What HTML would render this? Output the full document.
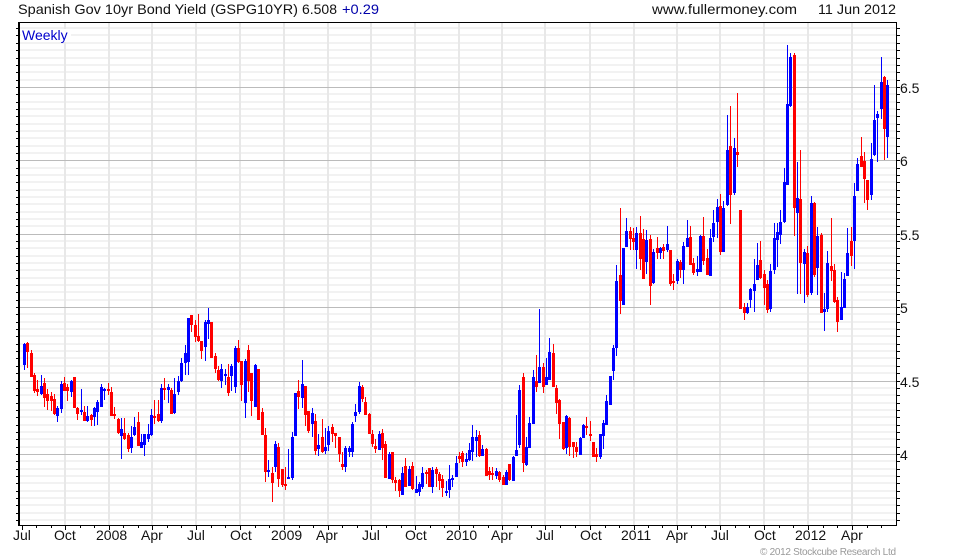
<!DOCTYPE html>
<html><head><meta charset="utf-8"><title>Spanish Gov 10yr Bond Yield</title>
<style>html,body{margin:0;padding:0;background:#fff;width:980px;height:560px;overflow:hidden}svg{display:block}text{font-family:"Liberation Sans",Arial,sans-serif;font-size:14px;fill:#111}</style></head>
<body>
<svg width="980" height="560" viewBox="0 0 980 560" xmlns="http://www.w3.org/2000/svg">
<rect width="980" height="560" fill="#fff"/>
<g shape-rendering="crispEdges" fill="none">
<path stroke="#f2f2f2" stroke-width="2" d="M19 28H896M19 35H896M19 43H896M19 50H896M19 58H896M19 65H896M19 72H896M19 80H896M19 94H896M19 102H896M19 109H896M19 116H896M19 124H896M19 131H896M19 138H896M19 146H896M19 153H896M19 168H896M19 175H896M19 182H896M19 190H896M19 197H896M19 204H896M19 212H896M19 219H896M19 226H896M19 241H896M19 248H896M19 256H896M19 263H896M19 270H896M19 278H896M19 285H896M19 292H896M19 300H896M19 314H896M19 322H896M19 329H896M19 336H896M19 344H896M19 351H896M19 358H896M19 366H896M19 373H896M19 388H896M19 395H896M19 403H896M19 410H896M19 417H896M19 425H896M19 432H896M19 439H896M19 447H896M19 461H896M19 469H896M19 476H896M19 483H896M19 491H896M19 498H896M19 505H896M19 513H896M19 520H896"/>
<path stroke="#e8e8e8" stroke-width="2" d="M65 23V525M109 23V525M152 23V525M196 23V525M240 23V525M284 23V525M328 23V525M371 23V525M415 23V525M459 23V525M502 23V525M545 23V525M590 23V525M634 23V525M677 23V525M720 23V525M764 23V525M808 23V525M852 23V525"/>
<path stroke="#bbbbbb" d="M19 87.5H896M19 160.5H896M19 234.5H896M19 307.5H896M19 381.5H896M19 454.5H896"/>
<rect x="21" y="29" width="50" height="13" fill="#fff" stroke="none"/>
<path stroke="#000" d="M18 22.5H897M896.5 22V526M18 525.5H897"/>
<path stroke="#000" stroke-width="2" d="M19 22V526"/>
<path stroke="#000" d="M16 28.5h2M16 35.5h2M16 43.5h2M16 50.5h2M16 58.5h2M16 65.5h2M16 72.5h2M16 80.5h2M16 87.5h2M16 94.5h2M16 102.5h2M16 109.5h2M16 116.5h2M16 124.5h2M16 131.5h2M16 138.5h2M16 146.5h2M16 153.5h2M16 160.5h2M16 168.5h2M16 175.5h2M16 182.5h2M16 190.5h2M16 197.5h2M16 204.5h2M16 212.5h2M16 219.5h2M16 226.5h2M16 234.5h2M16 241.5h2M16 248.5h2M16 256.5h2M16 263.5h2M16 270.5h2M16 278.5h2M16 285.5h2M16 292.5h2M16 300.5h2M16 307.5h2M16 314.5h2M16 322.5h2M16 329.5h2M16 336.5h2M16 344.5h2M16 351.5h2M16 358.5h2M16 366.5h2M16 373.5h2M16 381.5h2M16 388.5h2M16 395.5h2M16 403.5h2M16 410.5h2M16 417.5h2M16 425.5h2M16 432.5h2M16 439.5h2M16 447.5h2M16 454.5h2M16 461.5h2M16 469.5h2M16 476.5h2M16 483.5h2M16 491.5h2M16 498.5h2M16 505.5h2M16 513.5h2M16 520.5h2"/>
<path stroke="#000" d="M897 28.5h3M897 35.5h3M897 43.5h3M897 50.5h3M897 58.5h3M897 65.5h3M897 72.5h3M897 80.5h3M897 87.5h3M897 94.5h3M897 102.5h3M897 109.5h3M897 116.5h3M897 124.5h3M897 131.5h3M897 138.5h3M897 146.5h3M897 153.5h3M897 160.5h3M897 168.5h3M897 175.5h3M897 182.5h3M897 190.5h3M897 197.5h3M897 204.5h3M897 212.5h3M897 219.5h3M897 226.5h3M897 234.5h3M897 241.5h3M897 248.5h3M897 256.5h3M897 263.5h3M897 270.5h3M897 278.5h3M897 285.5h3M897 292.5h3M897 300.5h3M897 307.5h3M897 314.5h3M897 322.5h3M897 329.5h3M897 336.5h3M897 344.5h3M897 351.5h3M897 358.5h3M897 366.5h3M897 373.5h3M897 381.5h3M897 388.5h3M897 395.5h3M897 403.5h3M897 410.5h3M897 417.5h3M897 425.5h3M897 432.5h3M897 439.5h3M897 447.5h3M897 454.5h3M897 461.5h3M897 469.5h3M897 476.5h3M897 483.5h3M897 491.5h3M897 498.5h3M897 505.5h3M897 513.5h3M897 520.5h3"/>
<path stroke="#000" d="M22.5 526v4M65.5 526v4M109.5 526v4M152.5 526v4M196.5 526v4M240.5 526v4M284.5 526v4M328.5 526v4M371.5 526v4M415.5 526v4M459.5 526v4M502.5 526v4M545.5 526v4M590.5 526v4M634.5 526v4M677.5 526v4M720.5 526v4M764.5 526v4M808.5 526v4M852.5 526v4M36.5 526v2M51.5 526v2M80.5 526v2M94.5 526v2M123.5 526v2M138.5 526v2M167.5 526v2M181.5 526v2M211.5 526v2M225.5 526v2M255.5 526v2M269.5 526v2M299.5 526v2M313.5 526v2M342.5 526v2M357.5 526v2M386.5 526v2M401.5 526v2M430.5 526v2M444.5 526v2M473.5 526v2M488.5 526v2M517.5 526v2M531.5 526v2M560.5 526v2M575.5 526v2M605.5 526v2M619.5 526v2M648.5 526v2M662.5 526v2M691.5 526v2M705.5 526v2M735.5 526v2M749.5 526v2M779.5 526v2M793.5 526v2M823.5 526v2M837.5 526v2M867.5 526v2M881.5 526v2"/>
<path stroke="#0000ff" stroke-width="1" d="M24.5 343V370M41.5 375V395M57.5 406V422M61.5 381V413M71.5 380V397M81.5 389V415M87.5 406V422M94.5 407V426M97.5 400V425M101.5 384V407M104.5 388V400M121.5 418V459M131.5 426V453M134.5 417V436M141.5 434V448M144.5 434V456M148.5 424V442M151.5 409V436M161.5 384V423M168.5 384V403M174.5 378V414M178.5 376V395M181.5 358V382M185.5 345V375M188.5 318V375M205.5 320V361M208.5 308V339M221.5 364V388M225.5 369V385M231.5 364V391M235.5 346V393M245.5 359V418M255.5 364V407M268.5 460V477M275.5 441V472M288.5 449V479M292.5 432V480M295.5 393V436M302.5 360V408M312.5 408V437M318.5 434V456M325.5 428V454M328.5 426V451M345.5 446V472M349.5 446V457M352.5 422V457M355.5 404V422M359.5 382V414M379.5 431V450M389.5 452V479M402.5 467V495M409.5 466V486M416.5 476V493M419.5 482V496M422.5 467V489M432.5 467V493M446.5 481V496M449.5 465V498M452.5 475V487M456.5 456V477M466.5 453V466M469.5 443V461M472.5 425V461M476.5 430V457M482.5 445V456M496.5 468V479M506.5 470V485M513.5 456V481M516.5 415V456M519.5 385V448M526.5 437V466M529.5 417V448M533.5 370V424M539.5 309V383M546.5 358V385M549.5 338V380M566.5 415V454M580.5 437V455M583.5 424V438M600.5 434V459M603.5 420V449M606.5 395V425M610.5 376V405M613.5 345V380M616.5 265V356M623.5 248V305M626.5 218V247M636.5 227V269M646.5 230V274M653.5 249V284M660.5 247V259M667.5 226V252M677.5 259V284M683.5 242V284M687.5 220V247M697.5 256V276M700.5 235V272M710.5 229V276M713.5 210V242M717.5 199V238M723.5 201V252M727.5 115V206M734.5 138V195M747.5 303V314M750.5 288V308M754.5 259V312M757.5 243V280M770.5 264V312M774.5 223V274M777.5 223V267M780.5 210V244M784.5 168V223M787.5 45V185M790.5 53V107M797.5 162V294M804.5 249V303M811.5 196V295M817.5 227V295M824.5 293V331M827.5 251V312M841.5 272V320M844.5 273V308M847.5 228V276M854.5 183V269M857.5 158V191M871.5 143V200M874.5 85V156M877.5 111V162M881.5 57V119M887.5 80V158"/>
<path stroke="#0000ff" stroke-width="3" d="M24.5 344V365M41.5 386V394M57.5 408V416M61.5 384V409M71.5 381V392M81.5 410V412M87.5 416V421M94.5 408V417M97.5 402V412M101.5 387V407M104.5 389V391M121.5 429V436M131.5 437V448M134.5 427V435M141.5 442V448M144.5 434V445M148.5 434V439M151.5 415V435M161.5 388V421M168.5 387V390M174.5 394V413M178.5 381V392M181.5 363V381M185.5 353V363M188.5 318V362M205.5 322V347M208.5 320V324M221.5 369V381M225.5 374V376M231.5 366V376M235.5 348V387M245.5 361V403M255.5 365V407M268.5 470V472M275.5 444V467M288.5 477V479M292.5 437V478M295.5 393V436M302.5 384V398M312.5 413V424M318.5 445V449M325.5 447V451M328.5 431V445M345.5 448V467M349.5 448V452M352.5 424V452M355.5 412V416M359.5 386V412M379.5 434V450M389.5 454V479M402.5 473V495M409.5 469V486M416.5 489V493M419.5 484V492M422.5 473V487M432.5 470V487M446.5 491V493M449.5 479V490M452.5 478V480M456.5 463V477M466.5 459V462M469.5 450V460M472.5 437V452M476.5 437V441M482.5 449V456M496.5 471V476M506.5 472V485M513.5 457V481M516.5 450V456M519.5 390V445M526.5 447V465M529.5 423V448M533.5 377V424M539.5 367V383M546.5 377V385M549.5 352V380M566.5 416V448M580.5 438V455M583.5 425V438M600.5 434V457M603.5 423V436M606.5 401V425M610.5 376V405M613.5 348V371M616.5 281V348M623.5 248V305M626.5 231V247M636.5 233V250M646.5 240V262M653.5 252V283M660.5 248V253M667.5 244V250M677.5 261V281M683.5 246V270M687.5 238V247M697.5 269V272M700.5 236V272M710.5 238V276M713.5 223V237M717.5 207V222M723.5 208V252M727.5 150V205M734.5 148V193M747.5 307V313M750.5 289V300M754.5 284V291M757.5 265V280M770.5 271V309M774.5 238V270M777.5 232V240M780.5 222V235M784.5 182V222M787.5 104V185M790.5 57V106M797.5 198V213M804.5 252V264M811.5 203V293M817.5 236V268M824.5 309V312M827.5 263V309M841.5 307V320M844.5 279V308M847.5 253V276M854.5 196V241M857.5 164V191M871.5 159V195M874.5 120V155M877.5 114V118M881.5 82V109M887.5 85V137"/>
<path stroke="#ff0000" stroke-width="1" d="M27.5 342V368M31.5 350V377M34.5 373V393M37.5 380V396M44.5 378V407M47.5 389V410M51.5 392V411M54.5 394V415M64.5 377V391M67.5 384V401M74.5 377V408M77.5 407V420M84.5 406V421M91.5 414V426M108.5 383V395M111.5 387V416M114.5 407V419M118.5 418V434M124.5 418V440M128.5 433V452M138.5 412V446M154.5 400V424M158.5 400V422M164.5 378V400M171.5 388V414M191.5 315V332M195.5 320V342M198.5 314V342M201.5 341V359M211.5 322V358M215.5 353V373M218.5 366V381M228.5 364V396M238.5 340V363M241.5 361V401M248.5 345V392M251.5 373V416M258.5 369V420M262.5 408V435M265.5 428V482M272.5 467V502M278.5 443V487M282.5 469V487M285.5 467V490M298.5 380V409M305.5 386V426M308.5 411V433M315.5 414V455M322.5 419V453M332.5 424V442M335.5 433V448M339.5 437V462M342.5 452V470M362.5 385V402M365.5 397V415M369.5 413V434M372.5 430V447M375.5 439V453M382.5 429V460M385.5 441V478M392.5 452V483M395.5 477V491M399.5 479V497M405.5 458V487M412.5 462V490M426.5 470V484M429.5 468V487M436.5 467V487M439.5 472V490M442.5 475V497M459.5 452V463M462.5 451V467M479.5 431V457M486.5 448V476M489.5 467V480M492.5 467V480M499.5 471V482M503.5 475V485M509.5 464V481M523.5 373V472M536.5 355V392M543.5 363V393M553.5 344V387M556.5 385V414M559.5 399V439M563.5 422V450M569.5 417V456M573.5 442V458M576.5 442V457M586.5 417V435M590.5 421V441M593.5 442V457M596.5 448V462M620.5 208V314M630.5 227V250M633.5 228V250M640.5 216V270M643.5 229V279M650.5 235V305M657.5 237V259M663.5 244V259M670.5 250V286M673.5 274V290M680.5 260V278M690.5 226V265M693.5 258V275M703.5 217V265M707.5 249V275M720.5 194V255M730.5 106V224M737.5 93V167M740.5 210V309M744.5 303V320M760.5 241V279M764.5 270V305M767.5 280V313M794.5 53V236M800.5 150V294M807.5 246V297M814.5 202V277M821.5 233V313M831.5 218V281M834.5 264V303M837.5 297V332M851.5 227V266M861.5 137V167M864.5 152V203M867.5 180V210M884.5 76V160"/>
<path stroke="#ff0000" stroke-width="3" d="M27.5 343V352M31.5 353V377M34.5 375V391M37.5 389V392M44.5 383V398M47.5 394V401M51.5 396V401M54.5 399V414M64.5 383V391M67.5 387V391M74.5 377V408M77.5 408V414M84.5 412V421M91.5 415V420M108.5 389V391M111.5 392V416M114.5 414V416M118.5 419V433M124.5 433V439M128.5 435V449M138.5 422V446M154.5 416V418M158.5 414V421M164.5 388V390M171.5 390V414M191.5 315V325M195.5 325V337M198.5 336V341M201.5 341V351M211.5 322V358M215.5 356V369M218.5 370V380M228.5 377V393M238.5 348V362M241.5 361V385M248.5 350V381M251.5 373V401M258.5 369V420M262.5 412V435M265.5 435V472M272.5 473V483M278.5 447V479M282.5 469V485M285.5 484V486M298.5 391V397M305.5 386V415M308.5 411V431M315.5 421V451M322.5 437V452M332.5 427V434M335.5 433V436M339.5 437V454M342.5 464V467M362.5 387V399M365.5 402V415M369.5 414V434M372.5 434V444M375.5 446V449M382.5 433V448M385.5 444V478M392.5 452V480M395.5 480V483M399.5 480V491M405.5 466V487M412.5 466V489M426.5 472V474M429.5 468V487M436.5 469V474M439.5 474V481M442.5 479V488M459.5 456V459M462.5 453V462M479.5 435V456M486.5 449V476M489.5 471V475M492.5 473V475M499.5 472V480M503.5 477V485M509.5 464V480M523.5 377V463M536.5 381V387M543.5 367V387M553.5 353V387M556.5 388V403M559.5 400V424M563.5 422V449M569.5 418V447M573.5 442V447M576.5 447V452M586.5 426V428M590.5 434V436M593.5 442V457M596.5 454V457M620.5 275V301M630.5 231V239M633.5 238V242M640.5 233V259M643.5 239V279M650.5 239V286M657.5 248V253M663.5 247V251M670.5 250V284M673.5 281V283M680.5 262V270M690.5 237V265M693.5 263V273M703.5 236V261M707.5 258V275M720.5 206V252M730.5 146V195M737.5 152V155M740.5 210V309M744.5 307V313M760.5 260V278M764.5 274V288M767.5 284V310M794.5 55V208M800.5 199V263M807.5 253V295M814.5 203V275M821.5 235V313M831.5 266V271M834.5 270V302M837.5 300V322M851.5 241V256M861.5 156V167M864.5 161V179M867.5 180V200M884.5 77V129"/>
</g>
<text x="18" y="14" textLength="280" lengthAdjust="spacingAndGlyphs">Spanish Gov 10yr Bond Yield (GSPG10YR)</text>
<text x="302" y="14" textLength="35" lengthAdjust="spacingAndGlyphs">6.508</text>
<text x="342" y="14" textLength="37" lengthAdjust="spacingAndGlyphs" style="fill:#0000aa">+0.29</text>
<text x="652" y="14" textLength="145" lengthAdjust="spacingAndGlyphs">www.fullermoney.com</text>
<text x="818" y="14" textLength="78" lengthAdjust="spacingAndGlyphs">11 Jun 2012</text>
<text x="22" y="40" style="fill:#0000cc">Weekly</text>
<text x="900" y="93">6.5</text><text x="900" y="166">6</text><text x="900" y="240">5.5</text><text x="900" y="313">5</text><text x="900" y="387">4.5</text><text x="900" y="460">4</text>
<text x="13" y="540">Jul</text><text x="54" y="540">Oct</text><text x="96" y="540">2008</text><text x="141" y="540">Apr</text><text x="187" y="540">Jul</text><text x="230" y="540">Oct</text><text x="271" y="540">2009</text><text x="316" y="540">Apr</text><text x="362" y="540">Jul</text><text x="405" y="540">Oct</text><text x="446" y="540">2010</text><text x="491" y="540">Apr</text><text x="536" y="540">Jul</text><text x="580" y="540">Oct</text><text x="621" y="540">2011</text><text x="666" y="540">Apr</text><text x="711" y="540">Jul</text><text x="754" y="540">Oct</text><text x="795" y="540">2012</text><text x="841" y="540">Apr</text>
<text x="760" y="555" textLength="136" lengthAdjust="spacing" style="font-size:10px;fill:#999">© 2012 Stockcube Research Ltd</text>
</svg>
</body></html>
